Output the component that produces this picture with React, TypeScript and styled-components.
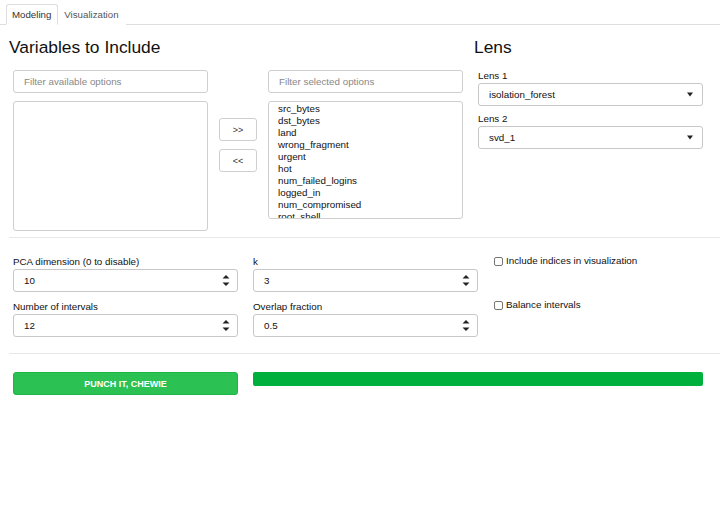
import React from "react";
import styled, { createGlobalStyle } from "styled-components";

const Global = createGlobalStyle`
  html, body { margin: 0; padding: 0; background: #fff; }
  body { font-family: "Liberation Sans", Arial, sans-serif; color: #222; }
  * { box-sizing: border-box; }
`;

const Page = styled.div`
  width: 720px;
  height: 530px;
  overflow: hidden;
`;

const TabBar = styled.div`
  display: flex;
  padding: 4px 0 0 6px;
  border-bottom: 1px solid #dedede;
  height: 25px;
`;

const Tab = styled.div<{ $active?: boolean }>`
  height: 21px;
  padding: 0 6px 0 5px;
  display: flex;
  align-items: center;
  font-size: 9.7px;
  color: ${(p) => (p.$active ? "#333" : "#555")};
  border: 1px solid ${(p) => (p.$active ? "#dedede" : "transparent")};
  border-bottom-color: ${(p) => (p.$active ? "#fff" : "transparent")};
  border-radius: 3px 3px 0 0;
  background: #fff;
  margin-bottom: -1px;
`;

const Top = styled.div`
  display: flex;
  padding: 12px 0 0 9px;
  height: 212px;
`;

const LeftCol = styled.div`
  width: 465px;
`;

const RightCol = styled.div`
  width: 246px;
`;

const Heading = styled.div`
  font-size: 17.4px;
  line-height: 20px;
  color: #111;
  height: 23px;
`;

const DualList = styled.div`
  display: grid;
  grid-template-columns: 195px 38px 195px;
  column-gap: 11px;
  padding: 10px 0 0 4px;
`;

const ListCol = styled.div`
  display: flex;
  flex-direction: column;
  gap: 8px;
`;

const TextInput = styled.div`
  height: 23px;
  border: 1px solid #cfcfcf;
  border-radius: 3px;
  display: flex;
  align-items: center;
  padding: 0 10px;
  font-size: 9.8px;
  color: #888;
`;

const ListBox = styled.div<{ $h: number }>`
  height: ${(p) => p.$h}px;
  border: 1px solid #cfcfcf;
  border-radius: 3px;
  padding: 1px 9px 0;
  overflow: hidden;
  font-size: 9.8px;
  line-height: 12px;
  color: #111;
`;

const MoveButtons = styled.div`
  display: flex;
  flex-direction: column;
  gap: 8px;
  padding-top: 48px;
`;

const SmallButton = styled.div`
  height: 23px;
  border: 1px solid #cfcfcf;
  border-radius: 3px;
  display: flex;
  align-items: center;
  justify-content: center;
  font-size: 9px;
  color: #333;
`;

const LensBody = styled.div`
  padding: 10px 0 0 4px;
`;

const Field = styled.div`
  display: flex;
  flex-direction: column;
  margin-bottom: 7px;
`;

const Label = styled.div`
  font-size: 9.8px;
  line-height: 12px;
  color: #111;
  margin-bottom: 1px;
`;

const Select = styled.div`
  width: 225px;
  height: 23px;
  border: 1px solid #c8c8c8;
  border-radius: 3px;
  display: flex;
  align-items: center;
  justify-content: space-between;
  padding: 0 9px 0 10px;
  font-size: 9.8px;
  color: #111;
`;

const Rule = styled.hr`
  margin: 0 0 0 9px;
  border: none;
  border-top: 1px solid #e8e8e8;
  height: 0;
`;

const Params = styled.div`
  display: grid;
  grid-template-columns: 240px 241px 220px;
  padding: 18px 0 0 13px;
  height: 115px;
`;

const ParamCol = styled.div`
  display: flex;
  flex-direction: column;
  gap: 9px;
`;

const NumField = styled.div`
  width: 225px;
  display: flex;
  flex-direction: column;
`;

const NumInput = styled.div`
  height: 23px;
  border: 1px solid #c8c8c8;
  border-radius: 3px;
  display: flex;
  align-items: center;
  justify-content: space-between;
  padding: 0 7px 0 10px;
  font-size: 9.8px;
  color: #111;
`;

const CheckCol = styled.div`
  display: flex;
  flex-direction: column;
  gap: 32px;
  margin-top: -1px;
`;

const CheckRow = styled.label`
  display: flex;
  align-items: center;
  gap: 3px;
  font-size: 9.8px;
  line-height: 12px;
  color: #111;
`;

const Box = styled.span`
  width: 9px;
  height: 9px;
  border: 1px solid #777;
  border-radius: 2px;
  background: #fff;
`;

const Actions = styled.div`
  display: grid;
  grid-template-columns: 225px 450px;
  column-gap: 15px;
  padding: 18px 0 0 13px;
  align-items: start;
`;

const GoButton = styled.div`
  height: 23px;
  background: #2bc153;
  border: 1px solid #1fb447;
  border-radius: 3px;
  color: #fff;
  font-size: 9px;
  font-weight: bold;
  display: flex;
  align-items: center;
  justify-content: center;
`;

const Progress = styled.div`
  height: 14px;
  background: #00b03c;
  border-radius: 2px;
`;

const Spinner = () => (
  <svg width="8" height="13" viewBox="0 0 8 13">
    <path d="M4 1 L7.5 4.5 L0.5 4.5 Z" fill="#222" />
    <path d="M4 12 L7.5 8.5 L0.5 8.5 Z" fill="#222" />
  </svg>
);

const Caret = () => (
  <svg width="6" height="5" viewBox="0 0 6 5">
    <path d="M0 0.5 L6 0.5 L3 4.5 Z" fill="#222" />
  </svg>
);

const selected = [
  "src_bytes",
  "dst_bytes",
  "land",
  "wrong_fragment",
  "urgent",
  "hot",
  "num_failed_logins",
  "logged_in",
  "num_compromised",
  "root_shell",
];

export default function App() {
  return (
    <Page>
      <Global />
      <TabBar>
        <Tab $active>Modeling</Tab>
        <Tab>Visualization</Tab>
      </TabBar>
      <Top>
        <LeftCol>
          <Heading>Variables to Include</Heading>
          <DualList>
            <ListCol>
              <TextInput>Filter available options</TextInput>
              <ListBox $h={130} />
            </ListCol>
            <MoveButtons>
              <SmallButton>&gt;&gt;</SmallButton>
              <SmallButton>&lt;&lt;</SmallButton>
            </MoveButtons>
            <ListCol>
              <TextInput>Filter selected options</TextInput>
              <ListBox $h={118}>
                {selected.map((s) => (
                  <div key={s}>{s}</div>
                ))}
              </ListBox>
            </ListCol>
          </DualList>
        </LeftCol>
        <RightCol>
          <Heading>Lens</Heading>
          <LensBody>
            <Field>
              <Label>Lens 1</Label>
              <Select>
                <span>isolation_forest</span>
                <Caret />
              </Select>
            </Field>
            <Field>
              <Label>Lens 2</Label>
              <Select>
                <span>svd_1</span>
                <Caret />
              </Select>
            </Field>
          </LensBody>
        </RightCol>
      </Top>
      <Rule />
      <Params>
        <ParamCol>
          <NumField>
            <Label>PCA dimension (0 to disable)</Label>
            <NumInput>
              <span>10</span>
              <Spinner />
            </NumInput>
          </NumField>
          <NumField>
            <Label>Number of intervals</Label>
            <NumInput>
              <span>12</span>
              <Spinner />
            </NumInput>
          </NumField>
        </ParamCol>
        <ParamCol>
          <NumField>
            <Label>k</Label>
            <NumInput>
              <span>3</span>
              <Spinner />
            </NumInput>
          </NumField>
          <NumField>
            <Label>Overlap fraction</Label>
            <NumInput>
              <span>0.5</span>
              <Spinner />
            </NumInput>
          </NumField>
        </ParamCol>
        <CheckCol>
          <CheckRow>
            <Box />
            Include indices in visualization
          </CheckRow>
          <CheckRow>
            <Box />
            Balance intervals
          </CheckRow>
        </CheckCol>
      </Params>
      <Rule />
      <Actions>
        <GoButton>PUNCH IT, CHEWIE</GoButton>
        <Progress />
      </Actions>
    </Page>
  );
}
